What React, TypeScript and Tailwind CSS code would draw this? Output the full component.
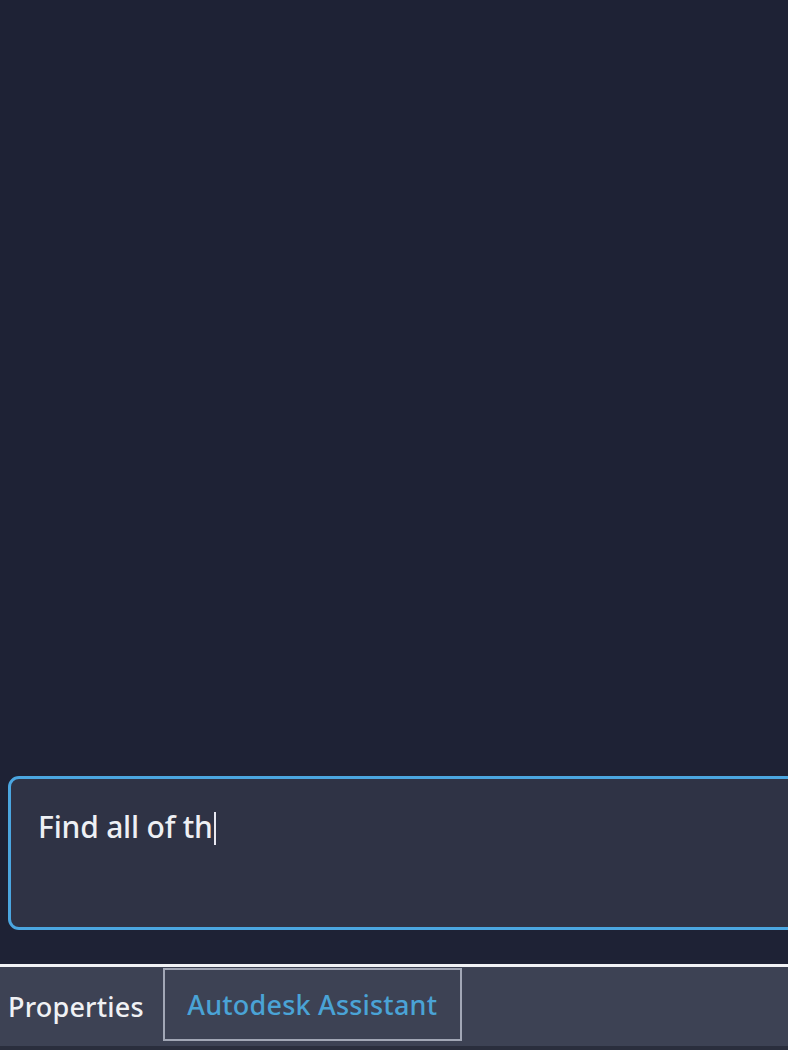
import React from "react";

export default function App() {
  return (
    <div
      className="w-[788px] h-[1050px] bg-[#1e2235] flex flex-col overflow-hidden"
      style={{ fontFamily: '"Noto Sans", "Open Sans", sans-serif' }}
    >
      <div className="flex-1" />
      <div className="pl-[8px] pb-[34px]">
        <div className="h-[154px] w-[800px] rounded-[11px] border-[3px] border-[#4ba6e0] bg-[#2f3345] pl-[27px] pt-[29px]">
          <span className="text-[30px] leading-[38px] font-medium text-[#eef0f4] tracking-[-0.2px]">
            Find all of th
          </span>
          <span className="inline-block w-[2px] h-[33px] bg-[#e8e8f0] align-[-7px] ml-[1px]" />
        </div>
      </div>
      <div className="h-[3px] bg-[#f2f3f6]" />
      <div className="h-[83px] bg-[#3d4254] flex items-stretch border-b-[4px] border-[#2a2e3d]">
        <div className="flex items-center pl-[8px] pr-[19px] pt-[2px] text-[27px] font-medium text-[#f0f1f4] tracking-[0.2px]">
          Properties
        </div>
        <div className="mt-[1px] mb-[5px] w-[299px] border-[2px] border-[#a2a7b6] flex items-center justify-center pt-[2px] text-[27px] font-medium text-[#4aa3d6] tracking-[0.2px]">
          Autodesk Assistant
        </div>
      </div>
    </div>
  );
}
